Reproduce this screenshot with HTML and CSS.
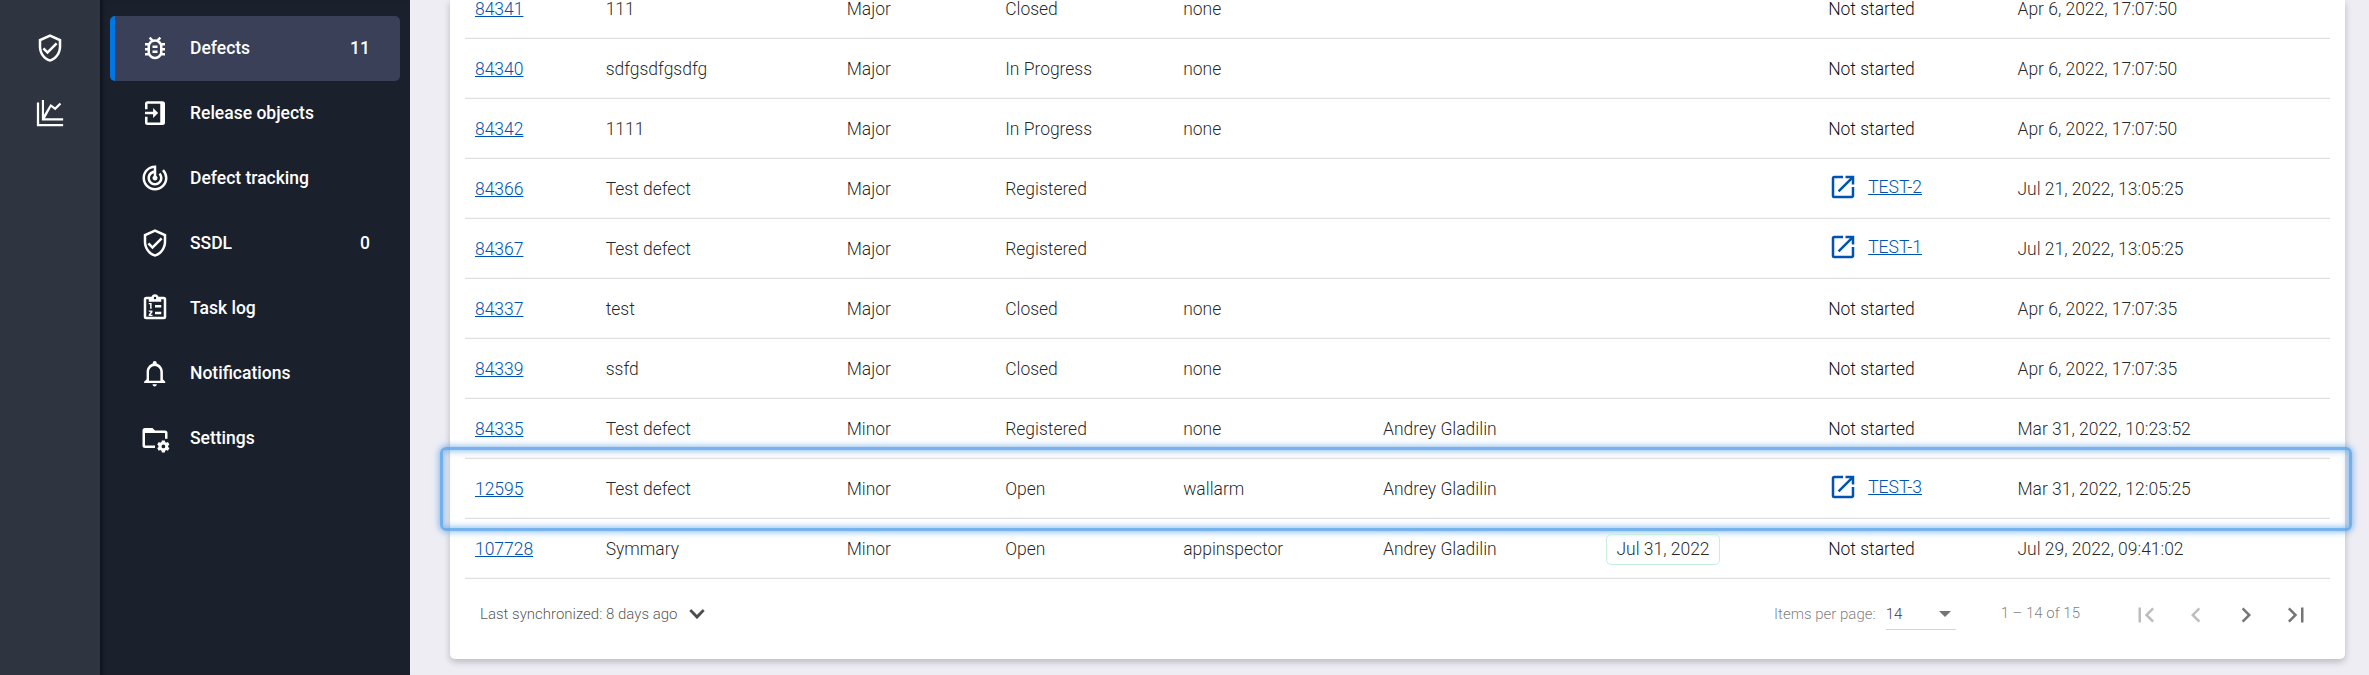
FILE: index.html
```html
<!DOCTYPE html>
<html lang="en">
<head>
<meta charset="utf-8">
<title>Defects</title>
<link rel="stylesheet" href="styles.css">
</head>
<body>
<svg class="sprite" aria-hidden="true">
  <symbol id="shield" viewBox="0 0 24 24"><path d="M21 11c0 5.550-3.840 10.740-9 12-5.160-1.260-9-6.450-9-12V5l9-4 9 4v6m-9 10c3.750-1 7-5.460 7-9.780V6.300l-7-3.120L5 6.300v4.920C5 15.540 8.250 20 12 21m-2-4-4-4 1.410-1.410L10 14.170l6.590-6.590L18 9"/></symbol>
  <symbol id="chart" viewBox="0 0 24 24"><path d="M1.500 3.500h1.800v17.200h19.200v1.800h-21zM5.500 1.500h1.700v11.800l5.200-8.600 3.600 2.700 3.800-3.600 1.200 1.200-4.800 4.700-3.300-2.500-4.900 9h14.500v1.800h-17z"/></symbol>
  <symbol id="bug" viewBox="0 0 24 24"><path d="M20 8h-2.810a5.990 5.990 0 0 0-1.820-1.960L17 4.410 15.590 3l-2.170 2.170a6.020 6.020 0 0 0-2.830 0L8.410 3 7 4.410l1.620 1.630C7.880 6.550 7.260 7.220 6.810 8H4v2h2.090c-.050.330-.090.660-.090 1v1H4v2h2v1c0 .340.040.670.090 1H4v2h2.810c1.040 1.790 2.970 3 5.190 3s4.150-1.210 5.190-3H20v-2h-2.090c.050-.330.090-.660.090-1v-1h2v-2h-2v-1c0-.340-.040-.670-.090-1H20V8zm-4 4v3c0 .220-.030.470-.070.700l-.100.650-.370.650c-.720 1.240-2.040 2-3.460 2s-2.740-.770-3.460-2l-.370-.640-.100-.650A4.500 4.500 0 0 1 8 15v-4c0-.230.030-.480.070-.700l.100-.650.370-.650c.300-.520.720-.970 1.210-1.310l.570-.390.740-.180a3.900 3.900 0 0 1 1.890 0l.680.160.610.420c.500.340.910.780 1.210 1.310l.380.650.100.650c.040.220.070.470.070.690v1zm-6 2h4v2h-4zm0-4h4v2h-4z"/></symbol>
  <symbol id="release" viewBox="0 0 24 24"><path d="M6 2.500h12a2 2 0 0 1 2 2v15a2 2 0 0 1-2 2H6a2 2 0 0 1-2-2V15h2v4.500h10.200v-15H6V9H4V4.500a2 2 0 0 1 2-2zM4 11h6.500V8l4 4-4 4v-3H4z"/></symbol>
  <symbol id="track" viewBox="0 0 24 24"><path d="m19.070 4.930-1.410 1.410A8.014 8.014 0 0 1 20 12c0 4.420-3.580 8-8 8s-8-3.580-8-8c0-4.080 3.050-7.440 7-7.930v2.020C8.160 6.570 6 9.030 6 12c0 3.310 2.690 6 6 6s6-2.690 6-6c0-1.660-.670-3.160-1.760-4.240l-1.410 1.410C15.550 9.900 16 10.900 16 12c0 2.210-1.790 4-4 4s-4-1.790-4-4c0-1.860 1.280-3.410 3-3.860v2.140c-.600.350-1 .980-1 1.720 0 1.100.900 2 2 2s2-.900 2-2c0-.740-.400-1.380-1-1.720V2h-1C6.480 2 2 6.480 2 12s4.480 10 10 10 10-4.480 10-10c0-2.760-1.120-5.260-2.930-7.070z"/></symbol>
  <symbol id="tasks" viewBox="0 0 24 24"><path fill-rule="evenodd" d="M19 3h-4.180a3 3 0 0 0-5.640 0H5a2 2 0 0 0-2 2v14a2 2 0 0 0 2 2h14a2 2 0 0 0 2-2V5a2 2 0 0 0-2-2zm-7 0a1 1 0 1 1 0 2 1 1 0 0 1 0-2zM5 5h2v2h10V5h2v14H5zM12 9.500h5v2h-5zM12 15h5v2h-5zM7 8h2.300v4.500H8.100V9H7zM7 14h3v1.300l-1.600 2H10v1H7v-1.100L8.600 15H7z"/></symbol>
  <symbol id="bell" viewBox="0 0 24 24"><path d="M10 21h3.500c0 1-.800 1.700-1.750 1.700S10 22 10 21m10.200-2v1H3.300v-1l2-2v-6c0-3.100 2-5.800 4.900-6.700V4a1.600 1.600 0 0 1 3.200 0v.300c2.900.900 4.900 3.600 4.900 6.700v6l1.900 2m-3.900-8a4.550 4.550 0 0 0-9.100 0v7.200h9.100z"/></symbol>
  <symbol id="folder" viewBox="0 0 24 24"><path d="M4 4h6l2 2h8a2 2 0 0 1 2 2v4.500h-2V8H4v10h8v2H4a2 2 0 0 1-2-2V6a2 2 0 0 1 2-2z"/><path fill-rule="evenodd" d="m17.800 14 .300 1.200 1 .500 1.200-.500 1.200 2-1 .900v1.100l1 .900-1.200 2-1.200-.500-1 .600-.300 1.300h-2.300l-.300-1.300-1-.600-1.200.500-1.200-2 1-.900v-1.100l-1-.900 1.200-2 1.200.500 1-.500.300-1.200zM16.700 17.200a1.500 1.500 0 1 0 0 3 1.500 1.500 0 0 0 0-3z" transform="translate(2 0)"/></symbol>
  <symbol id="open" viewBox="0 0 24 24"><path d="M19 19H5V5h7V3H5a2 2 0 0 0-2 2v14a2 2 0 0 0 2 2h14c1.100 0 2-.900 2-2v-7h-2v7zM14 3v2h3.590l-9.830 9.830 1.410 1.410L19 6.410V10h2V3h-7z"/></symbol>
  <symbol id="down" viewBox="0 0 24 24"><path d="M7.410 8.100 12 12.700l4.590-4.600L18 9.500l-6 6.400-6-6.400z" stroke="currentColor" stroke-width=".2"/></symbol>
  <symbol id="first" viewBox="0 0 24 24"><path d="M18.410 16.590 13.820 12l4.590-4.590L17 6l-6 6 6 6zM6 6h2v12H6z"/></symbol>
  <symbol id="prev" viewBox="0 0 24 24"><path d="M15.410 7.410 14 6l-6 6 6 6 1.410-1.410L10.830 12z"/></symbol>
  <symbol id="next" viewBox="0 0 24 24"><path d="M10 6 8.590 7.410 13.170 12l-4.580 4.590L10 18l6-6z"/></symbol>
  <symbol id="last" viewBox="0 0 24 24"><path d="M5.590 7.410 10.180 12l-4.590 4.590L7 18l6-6-6-6zM16 6h2v12h-2z"/></symbol>
</svg>
<div class="app">
  <aside class="rail">
    <svg class="icon"><use href="#shield"/></svg>
    <svg class="icon"><use href="#chart"/></svg>
  </aside>
  <nav class="sidebar">
    <a class="nav-item active"><svg class="icon"><use href="#bug"/></svg><span>Defects</span><span class="count">11</span></a>
    <a class="nav-item"><svg class="icon"><use href="#release"/></svg><span>Release objects</span></a>
    <a class="nav-item"><svg class="icon"><use href="#track"/></svg><span>Defect tracking</span></a>
    <a class="nav-item"><svg class="icon"><use href="#shield"/></svg><span>SSDL</span><span class="count">0</span></a>
    <a class="nav-item"><svg class="icon"><use href="#tasks"/></svg><span>Task log</span></a>
    <a class="nav-item"><svg class="icon"><use href="#bell"/></svg><span>Notifications</span></a>
    <a class="nav-item"><svg class="icon"><use href="#folder"/></svg><span>Settings</span></a>
  </nav>
  <main class="content">
    <section class="card">
      <div class="table">
        <div class="row"><a class="link">84341</a><span>111</span><span>Major</span><span>Closed</span><span>none</span><span></span><span></span><span class="state">Not started</span><span>Apr 6, 2022, 17:07:50</span></div>
        <div class="row"><a class="link">84340</a><span>sdfgsdfgsdfg</span><span>Major</span><span>In Progress</span><span>none</span><span></span><span></span><span class="state">Not started</span><span>Apr 6, 2022, 17:07:50</span></div>
        <div class="row"><a class="link">84342</a><span>1111</span><span>Major</span><span>In Progress</span><span>none</span><span></span><span></span><span class="state">Not started</span><span>Apr 6, 2022, 17:07:50</span></div>
        <div class="row"><a class="link">84366</a><span>Test defect</span><span>Major</span><span>Registered</span><span></span><span></span><span></span><span class="task"><svg class="icon"><use href="#open"/></svg><a class="link">TEST-2</a></span><span>Jul 21, 2022, 13:05:25</span></div>
        <div class="row"><a class="link">84367</a><span>Test defect</span><span>Major</span><span>Registered</span><span></span><span></span><span></span><span class="task"><svg class="icon"><use href="#open"/></svg><a class="link">TEST-1</a></span><span>Jul 21, 2022, 13:05:25</span></div>
        <div class="row"><a class="link">84337</a><span>test</span><span>Major</span><span>Closed</span><span>none</span><span></span><span></span><span class="state">Not started</span><span>Apr 6, 2022, 17:07:35</span></div>
        <div class="row"><a class="link">84339</a><span>ssfd</span><span>Major</span><span>Closed</span><span>none</span><span></span><span></span><span class="state">Not started</span><span>Apr 6, 2022, 17:07:35</span></div>
        <div class="row"><a class="link">84335</a><span>Test defect</span><span>Minor</span><span>Registered</span><span>none</span><span>Andrey Gladilin</span><span></span><span class="state">Not started</span><span>Mar 31, 2022, 10:23:52</span></div>
        <div class="row highlighted"><a class="link">12595</a><span>Test defect</span><span>Minor</span><span>Open</span><span>wallarm</span><span>Andrey Gladilin</span><span></span><span class="task"><svg class="icon"><use href="#open"/></svg><a class="link">TEST-3</a></span><span>Mar 31, 2022, 12:05:25</span></div>
        <div class="row"><a class="link">107728</a><span>Symmary</span><span>Minor</span><span>Open</span><span>appinspector</span><span>Andrey Gladilin</span><span><span class="due">Jul 31, 2022</span></span><span class="state">Not started</span><span>Jul 29, 2022, 09:41:02</span></div>
      </div>
      <footer class="footer">
        <div class="sync"><span>Last synchronized: 8 days ago</span><svg class="icon"><use href="#down"/></svg></div>
        <div class="pager">
          <span class="per-page">Items per page:</span>
          <span class="select"><span>14</span><i class="caret"></i></span>
          <span class="range">1 – 14 of 15</span>
          <span class="buttons">
            <svg class="icon disabled"><use href="#first"/></svg>
            <svg class="icon disabled"><use href="#prev"/></svg>
            <svg class="icon"><use href="#next"/></svg>
            <svg class="icon"><use href="#last"/></svg>
          </span>
        </div>
      </footer>
    </section>
  </main>
</div>
</body>
</html>
```
FILE: styles.css
```css
* { box-sizing: border-box; }

body {
  margin: 0;
  background: #eeedf4;
  color: rgba(0, 0, 0, .87);
  font: 300 17.5px/25px Roboto, sans-serif;
  letter-spacing: -0.02px;
}

.sprite { display: none; }

.icon {
  display: block;
  flex: none;
  width: 30px;
  height: 30px;
  fill: currentColor;
}

.app {
  display: flex;
  height: 675px;
  overflow: hidden;
}

/* Navigation */
.rail {
  display: flex;
  flex: none;
  flex-direction: column;
  align-items: center;
  gap: 35px;
  width: 100px;
  padding-top: 33px;
  background: #2f3540;
  color: #fff;
}

.sidebar {
  flex: none;
  width: 310px;
  padding: 16px 10px;
  background: #1b202d;
  box-shadow: inset 5px 0 4px -3px rgba(0, 0, 0, .5);
  color: #fff;
  font-weight: 500;
  letter-spacing: 0;
}

.nav-item {
  display: flex;
  align-items: center;
  gap: 20px;
  height: 65px;
  padding: 0 30px 0 25px;
  border-left: 5px solid transparent;
  border-radius: 5px;
}

.nav-item .icon { margin-bottom: 2px; }

.nav-item.active {
  border-color: #0076e4;
  background: #3a4058;
}

.count { margin-left: auto; }

/* Defects table */
.content {
  flex: 1;
  padding: 0 24px 16px 40px;
}

.card {
  height: 659px;
  padding: 0 15px;
  border-radius: 0 0 5px 5px;
  background: #fff;
  box-shadow: 0 3px 7px rgba(0, 0, 0, .22);
}

/* The list is scrolled: its first row starts above the card's visible top. */
.card::before {
  display: table;
  content: "";
}

.table { margin-top: -21px; }

.row {
  position: relative;
  display: grid;
  grid-template-columns: 130.7px 241px 158.500px 178px 199.800px 223.500px 221.700px 189.300px 1fr;
  align-items: center;
  height: 60px;
  padding: 1px 0 0 10px;
  border-bottom: 1px solid #e0e0e0;
  box-shadow: inset 0 -1px #f7f7f7;
  line-height: 18px;
  white-space: nowrap;
}

.link {
  color: #0053b2;
  text-decoration: underline;
}

.state { color: rgba(0, 0, 0, .95); }

.task {
  display: flex;
  align-items: center;
  gap: 10px;
  padding-bottom: 4px;
  color: #0053b2;
}

.due {
  display: inline-block;
  padding: 2px 9px;
  border: 1px solid #c8efdc;
  border-radius: 5px;
  line-height: 25px;
}

.highlighted::after {
  position: absolute;
  inset: -12px -22px -13px -25px;
  border: 3px solid rgba(84, 160, 232, .8);
  border-radius: 6px;
  box-shadow: 0 0 6px 1px rgba(84, 160, 232, .7), inset 0 0 6px 1px rgba(84, 160, 232, .7);
  content: "";
}

/* Footer */
.footer {
  display: flex;
  justify-content: space-between;
  padding: 20px 19px 0 15px;
  font-size: 15px;
  letter-spacing: 0;
}

.sync {
  display: flex;
  align-items: center;
  gap: 5px;
  height: 30px;
  color: rgba(0, 0, 0, .7);
}

.pager {
  display: flex;
  color: rgba(0, 0, 0, .54);
}

.per-page { padding-top: 3px; }

.select {
  display: flex;
  align-items: center;
  justify-content: space-between;
  width: 70px;
  height: 31px;
  margin-left: 10px;
  padding: 0 5px 0 0;
  border-bottom: 1px solid #d5d5d5;
  color: rgba(0, 0, 0, .8);
}

.caret {
  border-top: 6px solid #757575;
  border-right: 6px solid transparent;
  border-left: 6px solid transparent;
}

.range {
  margin-left: 45px;
  padding-top: 2px;
}

.buttons {
  display: flex;
  gap: 20px;
  margin: 1px 0 0 51px;
}

.buttons .icon { color: #757575; }
.buttons .disabled { color: #bdbdbd; }
```
